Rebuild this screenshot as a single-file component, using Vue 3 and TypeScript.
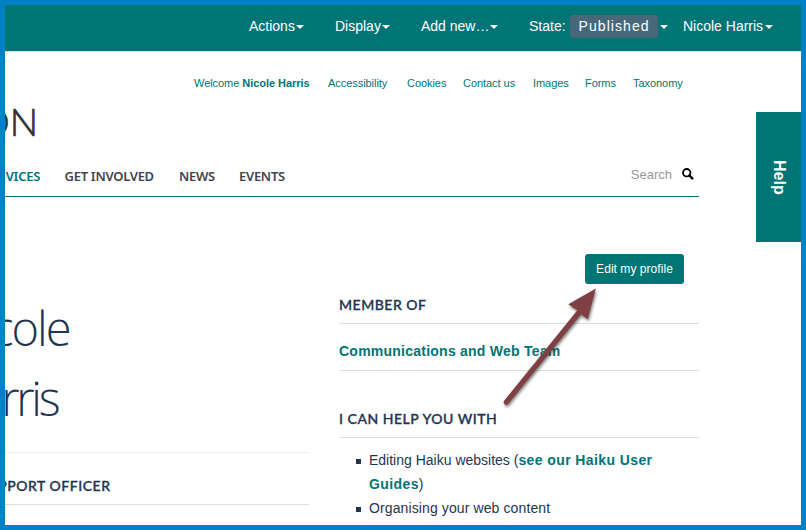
<script setup lang="ts">
interface MenuItem {
  label: string
  width: number
}

const toolbar: MenuItem[] = [
  { label: 'Actions', width: 86 },
  { label: 'Display', width: 86 },
  { label: 'Add new…', width: 108 },
]

const utilityLinks: MenuItem[] = [
  { label: 'Accessibility', width: 79 },
  { label: 'Cookies', width: 56 },
  { label: 'Contact us', width: 70 },
  { label: 'Images', width: 52 },
  { label: 'Forms', width: 48 },
  { label: 'Taxonomy', width: 52 },
]

const sections: MenuItem[] = [
  { label: 'GET INVOLVED', width: 114.5 },
  { label: 'NEWS', width: 60 },
  { label: 'EVENTS', width: 60 },
]
</script>

<template>
  <div class="frame">
    <header class="toolbar">
      <a v-for="item in toolbar" :key="item.label" class="tool" :style="{ width: item.width + 'px' }">
        <span>{{ item.label }}</span><i class="caret" :class="{ spaced: item.label.startsWith('Add') }"></i>
      </a>
      <a class="tool state"><span>State:</span><span class="badge">Published</span><i class="caret"></i></a>
      <a class="tool"><span>Nicole Harris</span><i class="caret"></i></a>
    </header>

    <nav class="utility">
      <span class="welcome">Welcome <b>Nicole Harris</b></span>
      <a v-for="link in utilityLinks" :key="link.label" :style="{ width: link.width + 'px' }">{{ link.label }}</a>
    </nav>

    <div class="brand"><span>ON</span></div>

    <nav class="sections">
      <a class="current"><span>VICES</span></a>
      <a v-for="item in sections" :key="item.label" :style="{ width: item.width + 'px' }">{{ item.label }}</a>
      <div class="search">
        <span>Search</span>
        <svg width="12" height="12" viewBox="0 0 12 12">
          <circle cx="4.7" cy="4.7" r="3.7" fill="none" stroke="#000" stroke-width="1.8" />
          <path d="M7.5 7.5 L10.2 10.4" stroke="#000" stroke-width="2.5" stroke-linecap="round" />
        </svg>
      </div>
    </nav>

    <main class="columns">
      <section class="profile">
        <h1><span>cole</span><span>rris</span></h1>
        <h2><span>PPORT OFFICER</span></h2>
      </section>
      <section class="details">
        <button type="button">Edit my profile</button>
        <h2 class="member">MEMBER OF</h2>
        <p><a>Communications and Web Team</a></p>
        <h2 class="help-with">I CAN HELP YOU WITH</h2>
        <ul>
          <li>Editing Haiku websites (<a>see our Haiku User Guides</a>)</li>
          <li><span class="organising">Organising your web content</span></li>
        </ul>
      </section>
    </main>

    <aside class="help"><span>Help</span></aside>

    <svg class="arrow" width="110" height="130" viewBox="495 282 110 130">
      <g fill="#7f4043">
        <path d="M506.3 402.2 L581 310" stroke="#7f4043" stroke-width="5.2" stroke-linecap="round" />
        <path d="M595.8 288.6 L568.3 304.3 L577.5 310.6 L580.5 314 L587.8 319.3 Z" />
      </g>
    </svg>
  </div>
</template>

<style>
body {
  margin: 0;
}
</style>

<style scoped>
* {
  box-sizing: border-box;
}
.frame {
  position: relative;
  width: 806px;
  height: 530px;
  border: 5px solid #0081c6;
  background: #fff;
  overflow: hidden;
  font-family: "Liberation Sans", Arial, sans-serif;
  color: #1f3551;
}
.toolbar {
  display: flex;
  height: 47px;
  padding: 0 0 4px 244px;
  align-items: center;
  background: #007575;
  border-bottom: 1px solid #d5e8ee;
  color: #fff;
  font-size: 14px;
  white-space: nowrap;
}
.tool {
  display: flex;
  align-items: center;
  flex: none;
}
.state {
  width: 154px;
}
.badge {
  height: 23px;
  width: 88px;
  margin: 0 2px 0 4px;
  padding-left: 1px;
  line-height: 23px;
  text-align: center;
  letter-spacing: 1.05px;
  border-radius: 3px;
  background: #476878;
}
.caret {
  width: 0;
  height: 0;
  margin: 2px 0 0 1.5px;
  border: 4px solid transparent;
  border-top-color: #fff;
  border-bottom: 0;
}
.state .caret {
  margin-left: 0;
}
.caret.spaced {
  margin-left: 1px;
}
.utility {
  display: flex;
  height: 63px;
  padding: 24px 0 0 189px;
  font-size: 11px;
  line-height: 14px;
  letter-spacing: -0.05px;
  color: #007575;
  white-space: nowrap;
}
.utility a {
  flex: none;
}
.welcome {
  flex: none;
  width: 134px;
}
.brand {
  display: flex;
  justify-content: flex-end;
  width: 33px;
  height: 43px;
  margin-top: -15px;
  overflow: hidden;
  font: 300 37.5px/43px Lato, sans-serif;
  color: #333;
  -webkit-text-stroke: 0.7px #333;
}
.sections {
  display: flex;
  width: 694px;
  height: 54px;
  border-bottom: 1px solid #007575;
  font: 600 13px/17px "Noto Sans", sans-serif;
  letter-spacing: -0.28px;
  color: #44444c;
  padding-top: 25px;
  white-space: nowrap;
}
.sections .current {
  display: flex;
  justify-content: flex-end;
  width: 35px;
  margin-right: 24.5px;
  color: #007575;
}
.search {
  display: flex;
  gap: 10px;
  margin: -1px 0 0 auto;
  padding-right: 5px;
  font: 13px/15px "Liberation Sans", Arial, sans-serif;
  letter-spacing: 0;
  color: #999;
}
.search svg {
  margin-top: 1px;
}
.columns {
  display: flex;
  gap: 30px;
}
.profile {
  width: 304px;
  padding-top: 96px;
}
h1,
h2,
p,
ul {
  margin: 0;
  padding: 0;
}
h1 {
  height: 160px;
  border-bottom: 1px solid #eee;
  font: 300 47px/70px "Open Sans", sans-serif;
}
h1 span {
  display: flex;
  justify-content: flex-end;
  width: 64.5px;
  letter-spacing: -2px;
}
h1 span + span {
  width: 52.5px;
  letter-spacing: -3.2px;
}
h2 {
  border-bottom: 1px solid #ddd;
  font: 500 14px/18px Lato, sans-serif;
  letter-spacing: 0.52px;
  -webkit-text-stroke: 0.35px #1f3551;
  white-space: nowrap;
}
.profile h2 {
  height: 52px;
  padding-top: 24px;
}
.profile h2 span {
  display: flex;
  justify-content: flex-end;
  width: 105.5px;
}
.details {
  width: 360px;
  padding-top: 57px;
}
button {
  display: block;
  width: 99px;
  height: 30px;
  margin-left: 246px;
  padding: 0;
  border: 0;
  border-radius: 3px;
  background: #007575;
  color: #fff;
  font: 12px/30px "Liberation Sans", Arial, sans-serif;
  letter-spacing: 0.05px;
}
.member {
  height: 40px;
  padding-top: 12px;
}
p {
  height: 47px;
  padding-top: 15px;
  border-bottom: 1px solid #ddd;
  font-size: 14px;
  line-height: 24px;
  letter-spacing: 0.24px;
}
.help-with {
  height: 67px;
  padding-top: 39px;
}
p a,
li a {
  color: #007575;
  font-weight: 700;
}
ul {
  padding: 10px 0 0 30px;
  list-style: none;
  font-size: 14px;
  line-height: 24px;
}
li {
  position: relative;
}
li a {
  letter-spacing: 0.4px;
}
.organising {
  letter-spacing: 0.11px;
}
li::before {
  content: "";
  position: absolute;
  left: -13px;
  top: 11px;
  width: 5px;
  height: 5px;
  background: #1f3551;
}
.help {
  position: absolute;
  right: 0;
  top: 107px;
  display: flex;
  align-items: center;
  justify-content: center;
  width: 45px;
  height: 130px;
  background: #007575;
  color: #fff;
  font-size: 16px;
  font-weight: 700;
}
.help span {
  writing-mode: vertical-rl;
}
.arrow {
  position: absolute;
  left: 490px;
  top: 277px;
  filter: drop-shadow(1px 2px 1.5px rgba(0, 0, 0, 0.5));
}
</style>
